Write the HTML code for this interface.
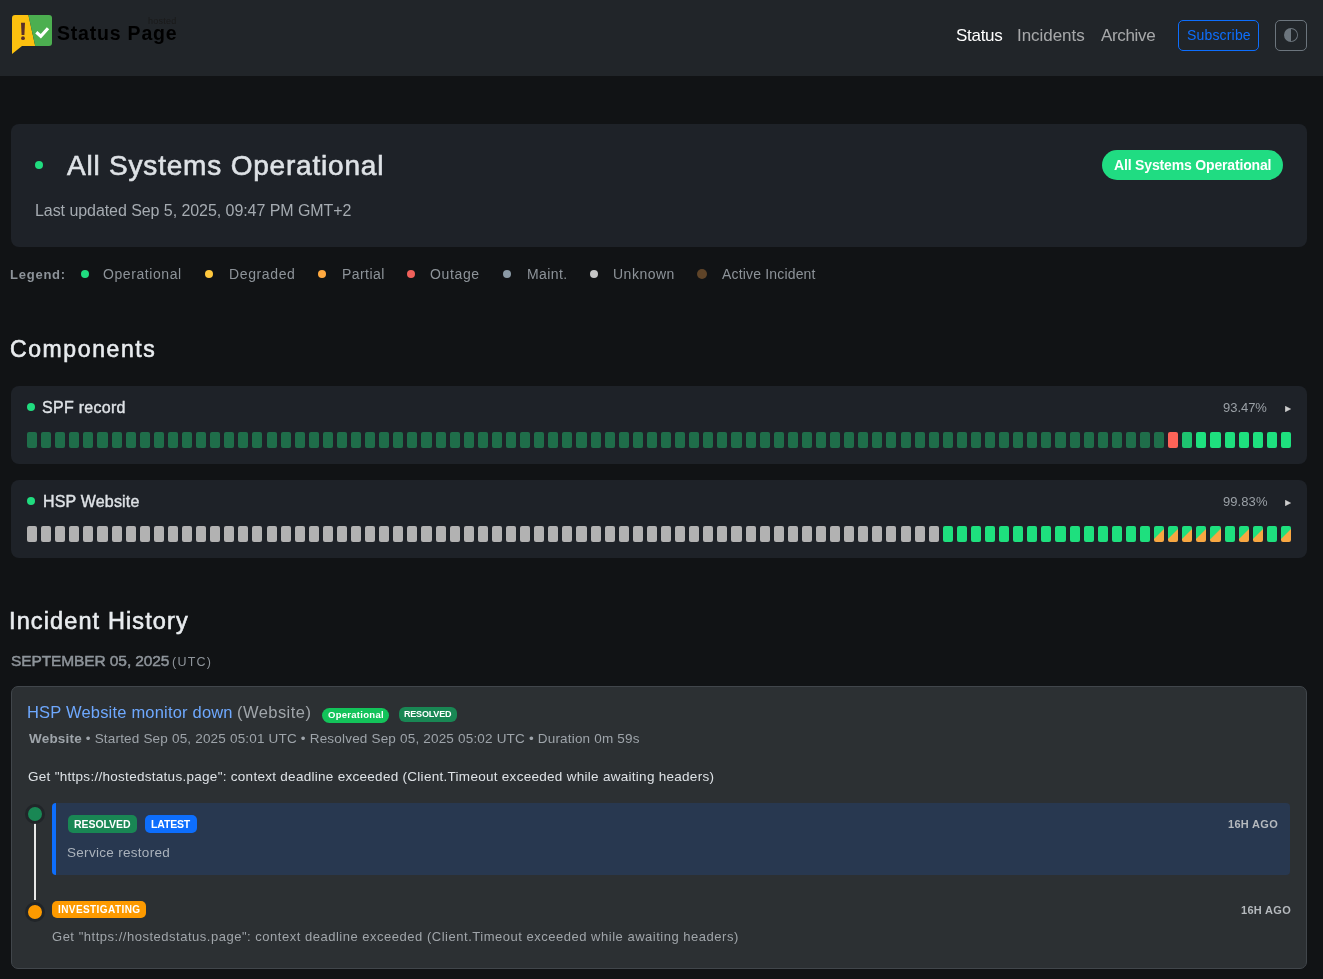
<!DOCTYPE html>
<html><head><meta charset="utf-8"><title>Status Page</title>
<style>
*{box-sizing:border-box;margin:0;padding:0}
html,body{width:1323px;height:979px;overflow:hidden}
body{background:#111315;font-family:"Liberation Sans",sans-serif;position:relative;color:#dee2e6}
.a{position:absolute}
.t{position:absolute;white-space:nowrap;line-height:1;will-change:transform}
.nav{left:0;top:0;width:1323px;height:76px;background:#212529}
.card{background:#1e2228;border-radius:8px}
.dot{position:absolute;border-radius:50%}
.bars i{position:absolute;width:10.09px;height:16px;border-radius:2px;display:block}
.bdg{position:absolute;color:#fff;font-weight:700;text-align:center;white-space:nowrap}
</style></head><body>
<!-- NAVBAR -->
<div class="a nav"></div>
<svg class="a" style="left:12px;top:15px" width="41" height="40" viewBox="0 0 41 40">
  <path d="M3 0 H16.4 L23.2 31 H10 L0 39 V3 Q0 0 3 0Z" fill="#fcc10f"/>
  <path d="M16.4 0 H37 Q40 0 40 3 V28 Q40 31 37 31 H23.2Z" fill="#4caf50"/>
  <path d="M9 7.7H13L12.4 20H9.6Z" fill="#5a2f2a"/>
  <circle cx="11" cy="23.2" r="1.9" fill="#5a2f2a"/>
  <path d="M24.3 17.2 L28.8 21.2 L36 13.2" fill="none" stroke="#fff" stroke-width="3.2"/>
</svg>
<div class="t" id="logo" style="left:56.60px;top:24.43px;font-size:19.5px;font-weight:700;color:#000;letter-spacing:0.800px">Status Page</div>
<div class="t" id="hosted" style="left:148.40px;top:16.55px;font-size:9px;font-weight:400;color:#1a1a1a;letter-spacing:0.260px">hosted</div>
<div class="t" id="nstatus" style="left:955.80px;top:26.85px;font-size:17px;font-weight:400;color:#fff;letter-spacing:-0.280px">Status</div>
<div class="t" id="nincidents" style="left:1016.50px;top:26.85px;font-size:17px;font-weight:400;color:rgba(255,255,255,.6);letter-spacing:-0.050px">Incidents</div>
<div class="t" id="narchive" style="left:1100.50px;top:26.85px;font-size:17px;font-weight:400;color:rgba(255,255,255,.6);letter-spacing:-0.333px">Archive</div>
<div class="a" style="left:1178px;top:20px;width:81px;height:31px;border:1px solid #0d6efd;border-radius:5px"></div>
<div class="t" id="subscribe" style="left:1186.80px;top:27.90px;font-size:14px;font-weight:400;color:#0d6efd;letter-spacing:0.175px">Subscribe</div>
<div class="a" style="left:1275px;top:20px;width:32px;height:31px;border:1px solid #6c757d;border-radius:5px"></div>
<svg class="a" style="left:1284px;top:28px" width="14" height="14" viewBox="0 0 16 16"><path d="M8 15A7 7 0 1 0 8 1zm0 1A8 8 0 1 1 8 0a8 8 0 0 1 0 16" fill="#6c757d"/></svg>

<!-- HERO -->
<div class="a card" style="left:11px;top:124px;width:1296px;height:123px"></div>
<div class="dot" style="left:35px;top:161px;width:8px;height:8px;background:#20dc7f"></div>
<div class="t" id="title" style="left:66.90px;top:152.40px;font-size:28px;font-weight:400;color:#dee2e6;letter-spacing:0.800px;-webkit-text-stroke:0.6px #dee2e6">All Systems Operational</div>
<div class="t" id="updated" style="left:34.50px;top:203.40px;font-size:16px;font-weight:400;color:#a5abb1;letter-spacing:-0.062px">Last updated Sep 5, 2025, 09:47 PM GMT+2</div>
<div class="a" style="left:1102px;top:150px;width:181px;height:30px;border-radius:15px;background:#20dc82"></div>
<div class="t" id="badge" style="left:1113.90px;top:158.00px;font-size:14px;font-weight:700;color:#fff;letter-spacing:-0.164px">All Systems Operational</div>

<!-- LEGEND -->
<div class="t" id="legend" style="left:9.90px;top:267.55px;font-size:13px;font-weight:700;color:#8d9399;letter-spacing:0.767px">Legend:</div>
<div class="dot" style="left:81px;top:270px;width:8px;height:8px;background:#20dc7f"></div>
<div class="t" id="l1" style="left:103.40px;top:267.10px;font-size:14px;font-weight:400;color:#8d9399;letter-spacing:0.580px">Operational</div>
<div class="dot" style="left:205px;top:270px;width:8px;height:8px;background:#ffc83d"></div>
<div class="t" id="l2" style="left:228.50px;top:267.10px;font-size:14px;font-weight:400;color:#8d9399;letter-spacing:0.629px">Degraded</div>
<div class="dot" style="left:318px;top:270px;width:8px;height:8px;background:#ffa940"></div>
<div class="t" id="l3" style="left:341.80px;top:267.10px;font-size:14px;font-weight:400;color:#8d9399;letter-spacing:0.433px">Partial</div>
<div class="dot" style="left:407px;top:270px;width:8px;height:8px;background:#f0605a"></div>
<div class="t" id="l4" style="left:429.90px;top:267.10px;font-size:14px;font-weight:400;color:#8d9399;letter-spacing:0.640px">Outage</div>
<div class="dot" style="left:503px;top:270px;width:8px;height:8px;background:#8b9aa6"></div>
<div class="t" id="l5" style="left:526.80px;top:267.10px;font-size:14px;font-weight:400;color:#8d9399;letter-spacing:0.400px">Maint.</div>
<div class="dot" style="left:590px;top:270px;width:8px;height:8px;background:#c6c6c6"></div>
<div class="t" id="l6" style="left:612.90px;top:267.10px;font-size:14px;font-weight:400;color:#8d9399;letter-spacing:0.500px">Unknown</div>
<div class="dot" style="left:697px;top:269px;width:10px;height:10px;background:#5f4428"></div>
<div class="t" id="l7" style="left:722.20px;top:267.10px;font-size:14px;font-weight:400;color:#8d9399;letter-spacing:0.171px">Active Incident</div>

<!-- COMPONENTS -->
<div class="t" id="components" style="left:10.40px;top:337.65px;font-size:23px;font-weight:400;color:#e9ecef;letter-spacing:1.600px;-webkit-text-stroke:0.6px #e9ecef">Components</div>

<div class="a card" style="left:11px;top:386px;width:1296px;height:78px"></div>
<div class="dot" style="left:27px;top:403px;width:8px;height:8px;background:#20dc7f"></div>
<div class="t" id="spf" style="left:42.30px;top:400.20px;font-size:16px;font-weight:400;color:#dee2e6;letter-spacing:0.289px;-webkit-text-stroke:0.4px #dee2e6">SPF record</div>
<div class="t" id="pct1" style="left:1223.40px;top:400.75px;font-size:13px;font-weight:400;color:#9aa0a6;letter-spacing:-0.040px">93.47%</div>
<svg class="a" style="left:1285px;top:405.5px" width="6" height="6" viewBox="0 0 6 6"><path d="M0.3 0.3L5.6 3L0.3 5.7Z" fill="#d0d0d0" stroke="#d0d0d0" stroke-width="0.6" stroke-linejoin="round"/></svg>
<div class="bars">
<i style="left:27.00px;top:432px;background:#1f6e4a"></i>
<i style="left:41.09px;top:432px;background:#1f6e4a"></i>
<i style="left:55.18px;top:432px;background:#1f6e4a"></i>
<i style="left:69.27px;top:432px;background:#1f6e4a"></i>
<i style="left:83.36px;top:432px;background:#1f6e4a"></i>
<i style="left:97.44px;top:432px;background:#1f6e4a"></i>
<i style="left:111.53px;top:432px;background:#1f6e4a"></i>
<i style="left:125.62px;top:432px;background:#1f6e4a"></i>
<i style="left:139.71px;top:432px;background:#1f6e4a"></i>
<i style="left:153.80px;top:432px;background:#1f6e4a"></i>
<i style="left:167.89px;top:432px;background:#1f6e4a"></i>
<i style="left:181.98px;top:432px;background:#1f6e4a"></i>
<i style="left:196.07px;top:432px;background:#1f6e4a"></i>
<i style="left:210.16px;top:432px;background:#1f6e4a"></i>
<i style="left:224.24px;top:432px;background:#1f6e4a"></i>
<i style="left:238.33px;top:432px;background:#1f6e4a"></i>
<i style="left:252.42px;top:432px;background:#1f6e4a"></i>
<i style="left:266.51px;top:432px;background:#1f6e4a"></i>
<i style="left:280.60px;top:432px;background:#1f6e4a"></i>
<i style="left:294.69px;top:432px;background:#1f6e4a"></i>
<i style="left:308.78px;top:432px;background:#1f6e4a"></i>
<i style="left:322.87px;top:432px;background:#1f6e4a"></i>
<i style="left:336.96px;top:432px;background:#1f6e4a"></i>
<i style="left:351.04px;top:432px;background:#1f6e4a"></i>
<i style="left:365.13px;top:432px;background:#1f6e4a"></i>
<i style="left:379.22px;top:432px;background:#1f6e4a"></i>
<i style="left:393.31px;top:432px;background:#1f6e4a"></i>
<i style="left:407.40px;top:432px;background:#1f6e4a"></i>
<i style="left:421.49px;top:432px;background:#1f6e4a"></i>
<i style="left:435.58px;top:432px;background:#1f6e4a"></i>
<i style="left:449.67px;top:432px;background:#1f6e4a"></i>
<i style="left:463.76px;top:432px;background:#1f6e4a"></i>
<i style="left:477.84px;top:432px;background:#1f6e4a"></i>
<i style="left:491.93px;top:432px;background:#1f6e4a"></i>
<i style="left:506.02px;top:432px;background:#1f6e4a"></i>
<i style="left:520.11px;top:432px;background:#1f6e4a"></i>
<i style="left:534.20px;top:432px;background:#1f6e4a"></i>
<i style="left:548.29px;top:432px;background:#1f6e4a"></i>
<i style="left:562.38px;top:432px;background:#1f6e4a"></i>
<i style="left:576.47px;top:432px;background:#1f6e4a"></i>
<i style="left:590.56px;top:432px;background:#1f6e4a"></i>
<i style="left:604.64px;top:432px;background:#1f6e4a"></i>
<i style="left:618.73px;top:432px;background:#1f6e4a"></i>
<i style="left:632.82px;top:432px;background:#1f6e4a"></i>
<i style="left:646.91px;top:432px;background:#1f6e4a"></i>
<i style="left:661.00px;top:432px;background:#1f6e4a"></i>
<i style="left:675.09px;top:432px;background:#1f6e4a"></i>
<i style="left:689.18px;top:432px;background:#1f6e4a"></i>
<i style="left:703.27px;top:432px;background:#1f6e4a"></i>
<i style="left:717.35px;top:432px;background:#1f6e4a"></i>
<i style="left:731.44px;top:432px;background:#1f6e4a"></i>
<i style="left:745.53px;top:432px;background:#1f6e4a"></i>
<i style="left:759.62px;top:432px;background:#1f6e4a"></i>
<i style="left:773.71px;top:432px;background:#1f6e4a"></i>
<i style="left:787.80px;top:432px;background:#1f6e4a"></i>
<i style="left:801.89px;top:432px;background:#1f6e4a"></i>
<i style="left:815.98px;top:432px;background:#1f6e4a"></i>
<i style="left:830.07px;top:432px;background:#1f6e4a"></i>
<i style="left:844.15px;top:432px;background:#1f6e4a"></i>
<i style="left:858.24px;top:432px;background:#1f6e4a"></i>
<i style="left:872.33px;top:432px;background:#1f6e4a"></i>
<i style="left:886.42px;top:432px;background:#1f6e4a"></i>
<i style="left:900.51px;top:432px;background:#1f6e4a"></i>
<i style="left:914.60px;top:432px;background:#1f6e4a"></i>
<i style="left:928.69px;top:432px;background:#1f6e4a"></i>
<i style="left:942.78px;top:432px;background:#1f6e4a"></i>
<i style="left:956.87px;top:432px;background:#1f6e4a"></i>
<i style="left:970.95px;top:432px;background:#1f6e4a"></i>
<i style="left:985.04px;top:432px;background:#1f6e4a"></i>
<i style="left:999.13px;top:432px;background:#1f6e4a"></i>
<i style="left:1013.22px;top:432px;background:#1f6e4a"></i>
<i style="left:1027.31px;top:432px;background:#1f6e4a"></i>
<i style="left:1041.40px;top:432px;background:#1f6e4a"></i>
<i style="left:1055.49px;top:432px;background:#1f6e4a"></i>
<i style="left:1069.58px;top:432px;background:#1f6e4a"></i>
<i style="left:1083.67px;top:432px;background:#1f6e4a"></i>
<i style="left:1097.75px;top:432px;background:#1f6e4a"></i>
<i style="left:1111.84px;top:432px;background:#1f6e4a"></i>
<i style="left:1125.93px;top:432px;background:#1f6e4a"></i>
<i style="left:1140.02px;top:432px;background:#1f6e4a"></i>
<i style="left:1154.11px;top:432px;background:#1f6e4a"></i>
<i style="left:1168.20px;top:432px;background:#fd6458"></i>
<i style="left:1182.29px;top:432px;background:#1ec470"></i>
<i style="left:1196.38px;top:432px;background:#1ee07e"></i>
<i style="left:1210.47px;top:432px;background:#1ee07e"></i>
<i style="left:1224.55px;top:432px;background:#1ee07e"></i>
<i style="left:1238.64px;top:432px;background:#1ee07e"></i>
<i style="left:1252.73px;top:432px;background:#1ee07e"></i>
<i style="left:1266.82px;top:432px;background:#1ee07e"></i>
<i style="left:1280.91px;top:432px;background:#1ee07e"></i>
</div>

<div class="a card" style="left:11px;top:480px;width:1296px;height:78px"></div>
<div class="dot" style="left:27px;top:497px;width:8px;height:8px;background:#20dc7f"></div>
<div class="t" id="hsp" style="left:42.50px;top:493.60px;font-size:16px;font-weight:400;color:#dee2e6;letter-spacing:0.180px;-webkit-text-stroke:0.4px #dee2e6">HSP Website</div>
<div class="t" id="pct2" style="left:1223.30px;top:494.75px;font-size:13px;font-weight:400;color:#9aa0a6;letter-spacing:0.080px">99.83%</div>
<svg class="a" style="left:1285px;top:499.5px" width="6" height="6" viewBox="0 0 6 6"><path d="M0.3 0.3L5.6 3L0.3 5.7Z" fill="#d0d0d0" stroke="#d0d0d0" stroke-width="0.6" stroke-linejoin="round"/></svg>
<div class="bars">
<i style="left:27.00px;top:526px;background:#b2b2b2"></i>
<i style="left:41.09px;top:526px;background:#b2b2b2"></i>
<i style="left:55.18px;top:526px;background:#b2b2b2"></i>
<i style="left:69.27px;top:526px;background:#b2b2b2"></i>
<i style="left:83.36px;top:526px;background:#b2b2b2"></i>
<i style="left:97.44px;top:526px;background:#b2b2b2"></i>
<i style="left:111.53px;top:526px;background:#b2b2b2"></i>
<i style="left:125.62px;top:526px;background:#b2b2b2"></i>
<i style="left:139.71px;top:526px;background:#b2b2b2"></i>
<i style="left:153.80px;top:526px;background:#b2b2b2"></i>
<i style="left:167.89px;top:526px;background:#b2b2b2"></i>
<i style="left:181.98px;top:526px;background:#b2b2b2"></i>
<i style="left:196.07px;top:526px;background:#b2b2b2"></i>
<i style="left:210.16px;top:526px;background:#b2b2b2"></i>
<i style="left:224.24px;top:526px;background:#b2b2b2"></i>
<i style="left:238.33px;top:526px;background:#b2b2b2"></i>
<i style="left:252.42px;top:526px;background:#b2b2b2"></i>
<i style="left:266.51px;top:526px;background:#b2b2b2"></i>
<i style="left:280.60px;top:526px;background:#b2b2b2"></i>
<i style="left:294.69px;top:526px;background:#b2b2b2"></i>
<i style="left:308.78px;top:526px;background:#b2b2b2"></i>
<i style="left:322.87px;top:526px;background:#b2b2b2"></i>
<i style="left:336.96px;top:526px;background:#b2b2b2"></i>
<i style="left:351.04px;top:526px;background:#b2b2b2"></i>
<i style="left:365.13px;top:526px;background:#b2b2b2"></i>
<i style="left:379.22px;top:526px;background:#b2b2b2"></i>
<i style="left:393.31px;top:526px;background:#b2b2b2"></i>
<i style="left:407.40px;top:526px;background:#b2b2b2"></i>
<i style="left:421.49px;top:526px;background:#b2b2b2"></i>
<i style="left:435.58px;top:526px;background:#b2b2b2"></i>
<i style="left:449.67px;top:526px;background:#b2b2b2"></i>
<i style="left:463.76px;top:526px;background:#b2b2b2"></i>
<i style="left:477.84px;top:526px;background:#b2b2b2"></i>
<i style="left:491.93px;top:526px;background:#b2b2b2"></i>
<i style="left:506.02px;top:526px;background:#b2b2b2"></i>
<i style="left:520.11px;top:526px;background:#b2b2b2"></i>
<i style="left:534.20px;top:526px;background:#b2b2b2"></i>
<i style="left:548.29px;top:526px;background:#b2b2b2"></i>
<i style="left:562.38px;top:526px;background:#b2b2b2"></i>
<i style="left:576.47px;top:526px;background:#b2b2b2"></i>
<i style="left:590.56px;top:526px;background:#b2b2b2"></i>
<i style="left:604.64px;top:526px;background:#b2b2b2"></i>
<i style="left:618.73px;top:526px;background:#b2b2b2"></i>
<i style="left:632.82px;top:526px;background:#b2b2b2"></i>
<i style="left:646.91px;top:526px;background:#b2b2b2"></i>
<i style="left:661.00px;top:526px;background:#b2b2b2"></i>
<i style="left:675.09px;top:526px;background:#b2b2b2"></i>
<i style="left:689.18px;top:526px;background:#b2b2b2"></i>
<i style="left:703.27px;top:526px;background:#b2b2b2"></i>
<i style="left:717.35px;top:526px;background:#b2b2b2"></i>
<i style="left:731.44px;top:526px;background:#b2b2b2"></i>
<i style="left:745.53px;top:526px;background:#b2b2b2"></i>
<i style="left:759.62px;top:526px;background:#b2b2b2"></i>
<i style="left:773.71px;top:526px;background:#b2b2b2"></i>
<i style="left:787.80px;top:526px;background:#b2b2b2"></i>
<i style="left:801.89px;top:526px;background:#b2b2b2"></i>
<i style="left:815.98px;top:526px;background:#b2b2b2"></i>
<i style="left:830.07px;top:526px;background:#b2b2b2"></i>
<i style="left:844.15px;top:526px;background:#b2b2b2"></i>
<i style="left:858.24px;top:526px;background:#b2b2b2"></i>
<i style="left:872.33px;top:526px;background:#b2b2b2"></i>
<i style="left:886.42px;top:526px;background:#b2b2b2"></i>
<i style="left:900.51px;top:526px;background:#b2b2b2"></i>
<i style="left:914.60px;top:526px;background:#b2b2b2"></i>
<i style="left:928.69px;top:526px;background:#b2b2b2"></i>
<i style="left:942.78px;top:526px;background:#1ee07e"></i>
<i style="left:956.87px;top:526px;background:#1ee07e"></i>
<i style="left:970.95px;top:526px;background:#1ee07e"></i>
<i style="left:985.04px;top:526px;background:#1ee07e"></i>
<i style="left:999.13px;top:526px;background:#1ee07e"></i>
<i style="left:1013.22px;top:526px;background:#1ee07e"></i>
<i style="left:1027.31px;top:526px;background:#1ee07e"></i>
<i style="left:1041.40px;top:526px;background:#1ee07e"></i>
<i style="left:1055.49px;top:526px;background:#1ee07e"></i>
<i style="left:1069.58px;top:526px;background:#1ee07e"></i>
<i style="left:1083.67px;top:526px;background:#1ee07e"></i>
<i style="left:1097.75px;top:526px;background:#1ee07e"></i>
<i style="left:1111.84px;top:526px;background:#1ee07e"></i>
<i style="left:1125.93px;top:526px;background:#1ee07e"></i>
<i style="left:1140.02px;top:526px;background:#1ee07e"></i>
<i style="left:1154.11px;top:526px;background:linear-gradient(135deg,#1ee07e 47%,#f8a742 53%)"></i>
<i style="left:1168.20px;top:526px;background:linear-gradient(135deg,#1ee07e 47%,#f8a742 53%)"></i>
<i style="left:1182.29px;top:526px;background:linear-gradient(135deg,#1ee07e 47%,#f8a742 53%)"></i>
<i style="left:1196.38px;top:526px;background:linear-gradient(135deg,#1ee07e 47%,#f8a742 53%)"></i>
<i style="left:1210.47px;top:526px;background:linear-gradient(135deg,#1ee07e 47%,#f8a742 53%)"></i>
<i style="left:1224.55px;top:526px;background:#1ee07e"></i>
<i style="left:1238.64px;top:526px;background:linear-gradient(135deg,#1ee07e 47%,#f8a742 53%)"></i>
<i style="left:1252.73px;top:526px;background:linear-gradient(135deg,#1ee07e 47%,#f8a742 53%)"></i>
<i style="left:1266.82px;top:526px;background:#1ee07e"></i>
<i style="left:1280.91px;top:526px;background:linear-gradient(135deg,#1ee07e 47%,#f8a742 53%)"></i>
</div>

<!-- INCIDENT HISTORY -->
<div class="t" id="history" style="left:9.40px;top:610.02px;font-size:23.5px;font-weight:400;color:#e9ecef;letter-spacing:1.120px;-webkit-text-stroke:0.6px #e9ecef">Incident History</div>
<div class="t" id="sept" style="left:10.60px;top:652.53px;font-size:15.5px;font-weight:400;color:#8e949a;letter-spacing:-0.106px;-webkit-text-stroke:0.5px #8e949a">SEPTEMBER 05, 2025</div>
<div class="t" id="utc" style="left:172.40px;top:656.08px;font-size:12.5px;font-weight:400;color:#8e949a;letter-spacing:1.250px">(UTC)</div>

<div class="a" style="left:11px;top:686px;width:1296px;height:283px;background:#2c3033;border:1px solid #41464b;border-radius:7px"></div>
<div class="t" id="inctitle" style="left:27.40px;top:703.98px;font-size:16.5px;font-weight:400;color:#6ea8fe;letter-spacing:0.191px">HSP Website monitor down</div>
<div class="t" id="website" style="left:236.50px;top:703.98px;font-size:16.5px;font-weight:400;color:#a0a5aa;letter-spacing:0.450px">(Website)</div>
<div class="a" style="left:322px;top:708px;width:67px;height:15px;border-radius:8px;background:#13c35a"></div>
<div class="t" id="b_oper" style="left:328.00px;top:710.02px;font-size:9.5px;font-weight:700;color:#fff;letter-spacing:0.280px">Operational</div>
<div class="a" style="left:399px;top:707px;width:58px;height:15px;border-radius:6px;background:#198754"></div>
<div class="t" id="b_res1" style="left:404.00px;top:710.35px;font-size:9px;font-weight:700;color:#fff;letter-spacing:-0.200px">RESOLVED</div>
<div class="t" id="meta" style="left:28.50px;top:731.52px;font-size:13.5px;font-weight:400;color:#9ea4aa;letter-spacing:0.189px"><b style="font-weight:700">Website</b> • Started Sep 05, 2025 05:01 UTC • Resolved Sep 05, 2025 05:02 UTC • Duration 0m 59s</div>
<div class="t" id="desc" style="left:27.50px;top:770.32px;font-size:13.5px;font-weight:400;color:#dee2e6;letter-spacing:0.283px">Get "https://hostedstatus.page": context deadline exceeded (Client.Timeout exceeded while awaiting headers)</div>

<!-- TIMELINE -->
<div class="a" style="left:34px;top:822px;width:2px;height:78px;background:#e8e8e8"></div>
<div class="dot" style="left:25px;top:804px;width:20px;height:20px;background:#198754;border:3px solid #212529"></div>
<div class="dot" style="left:25px;top:902px;width:20px;height:20px;background:#fd9a00;border:3px solid #212529"></div>

<div class="a" style="left:52px;top:803px;width:1238px;height:72px;background:#283850;border-left:4px solid #0d6efd;border-radius:4px"></div>
<div class="a" style="left:68px;top:815px;width:69px;height:18px;border-radius:5px;background:#198754"></div>
<div class="t" id="b_res2" style="left:73.50px;top:819.38px;font-size:10.5px;font-weight:700;color:#fff;letter-spacing:-0.057px">RESOLVED</div>
<div class="a" style="left:145px;top:815px;width:52px;height:18px;border-radius:5px;background:#0d6efd"></div>
<div class="t" id="b_latest" style="left:151.00px;top:819.38px;font-size:10.5px;font-weight:700;color:#fff;letter-spacing:-0.160px">LATEST</div>
<div class="t" id="ago1" style="left:1228.40px;top:819.05px;font-size:11px;font-weight:700;color:#b5b9bd;letter-spacing:0.300px">16H AGO</div>
<div class="t" id="restored" style="left:66.75px;top:845.52px;font-size:13.5px;font-weight:400;color:#aab2bb;letter-spacing:0.300px">Service restored</div>

<div class="a" style="left:52px;top:901px;width:94px;height:17px;border-radius:5px;background:#fd9a00"></div>
<div class="t" id="b_inv" style="left:58.00px;top:904.60px;font-size:10px;font-weight:700;color:#fff;letter-spacing:0.417px">INVESTIGATING</div>
<div class="t" id="ago2" style="left:1241.10px;top:904.95px;font-size:11px;font-weight:700;color:#b5b9bd;letter-spacing:0.300px">16H AGO</div>
<div class="t" id="desc2" style="left:51.80px;top:930.15px;font-size:13px;font-weight:400;color:#a0a5aa;letter-spacing:0.515px">Get "https://hostedstatus.page": context deadline exceeded (Client.Timeout exceeded while awaiting headers)</div>
</body></html>
